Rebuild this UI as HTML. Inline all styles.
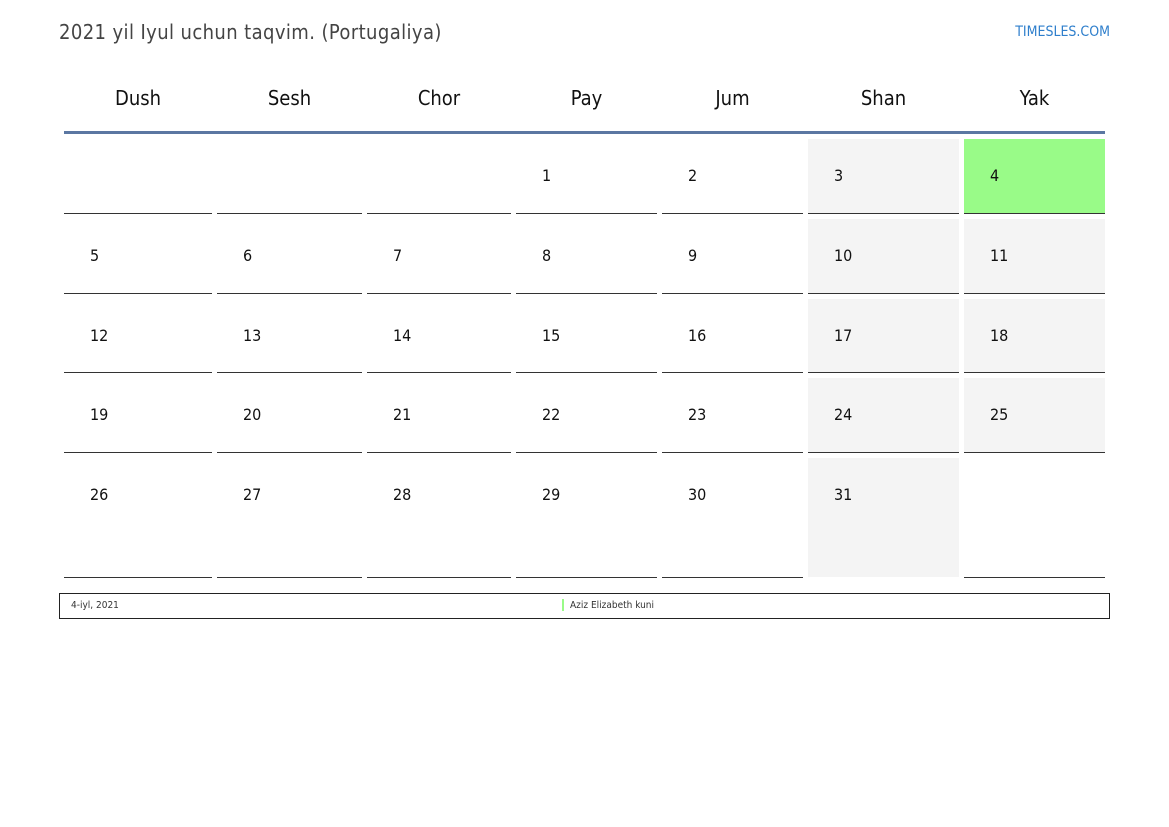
<!DOCTYPE html>
<html><head><meta charset="utf-8"><style>
body{margin:0;width:1169px;height:827px;background:#fff;position:relative;font-family:"DejaVu Sans Condensed","DejaVu Sans",sans-serif;overflow:hidden}
.a{position:absolute}
.t{left:59px;top:20px;font-size:20px;color:#444;white-space:nowrap;letter-spacing:0.4px}
.lg{right:59px;top:24px;font-size:14px;color:#2f7fcc}
.h{top:86px;font-size:20px;color:#111;text-align:center}
.bl{left:64px;top:131px;width:1041px;height:3px;background:#5b77a2}
.c{border-bottom:1px solid #333;box-sizing:border-box}
.n{position:absolute;left:26px;font-size:16px;color:#111}
.g{background:#f4f4f4}
.gr{background:#99fb88}
.f{left:59px;top:593px;width:1051px;height:26px;border:1px solid #222;box-sizing:border-box;font-size:10px;color:#333}
</style></head><body>
<div class="a t">2021 yil Iyul uchun taqvim. (Portugaliya)</div>
<div class="a lg">TIMESLES.COM</div>
<div class="a h" style="left:64px;width:148px">Dush</div>
<div class="a h" style="left:217px;width:145px">Sesh</div>
<div class="a h" style="left:367px;width:144px">Chor</div>
<div class="a h" style="left:516px;width:141px">Pay</div>
<div class="a h" style="left:662px;width:141px">Jum</div>
<div class="a h" style="left:808px;width:151px">Shan</div>
<div class="a h" style="left:964px;width:141px">Yak</div>
<div class="a bl"></div>

<div class="a c" style="left:64px;top:139px;width:148px;height:75px"></div>
<div class="a c" style="left:217px;top:139px;width:145px;height:75px"></div>
<div class="a c" style="left:367px;top:139px;width:144px;height:75px"></div>
<div class="a c" style="left:516px;top:139px;width:141px;height:75px"><span class="n" style="top:27px">1</span></div>
<div class="a c" style="left:662px;top:139px;width:141px;height:75px"><span class="n" style="top:27px">2</span></div>
<div class="a c g" style="left:808px;top:139px;width:151px;height:75px"><span class="n" style="top:27px">3</span></div>
<div class="a c gr" style="left:964px;top:139px;width:141px;height:75px"><span class="n" style="top:27px">4</span></div>

<div class="a c" style="left:64px;top:219px;width:148px;height:75px"><span class="n" style="top:27px">5</span></div>
<div class="a c" style="left:217px;top:219px;width:145px;height:75px"><span class="n" style="top:27px">6</span></div>
<div class="a c" style="left:367px;top:219px;width:144px;height:75px"><span class="n" style="top:27px">7</span></div>
<div class="a c" style="left:516px;top:219px;width:141px;height:75px"><span class="n" style="top:27px">8</span></div>
<div class="a c" style="left:662px;top:219px;width:141px;height:75px"><span class="n" style="top:27px">9</span></div>
<div class="a c g" style="left:808px;top:219px;width:151px;height:75px"><span class="n" style="top:27px">10</span></div>
<div class="a c g" style="left:964px;top:219px;width:141px;height:75px"><span class="n" style="top:27px">11</span></div>

<div class="a c" style="left:64px;top:299px;width:148px;height:74px"><span class="n" style="top:27px">12</span></div>
<div class="a c" style="left:217px;top:299px;width:145px;height:74px"><span class="n" style="top:27px">13</span></div>
<div class="a c" style="left:367px;top:299px;width:144px;height:74px"><span class="n" style="top:27px">14</span></div>
<div class="a c" style="left:516px;top:299px;width:141px;height:74px"><span class="n" style="top:27px">15</span></div>
<div class="a c" style="left:662px;top:299px;width:141px;height:74px"><span class="n" style="top:27px">16</span></div>
<div class="a c g" style="left:808px;top:299px;width:151px;height:74px"><span class="n" style="top:27px">17</span></div>
<div class="a c g" style="left:964px;top:299px;width:141px;height:74px"><span class="n" style="top:27px">18</span></div>

<div class="a c" style="left:64px;top:378px;width:148px;height:75px"><span class="n" style="top:27px">19</span></div>
<div class="a c" style="left:217px;top:378px;width:145px;height:75px"><span class="n" style="top:27px">20</span></div>
<div class="a c" style="left:367px;top:378px;width:144px;height:75px"><span class="n" style="top:27px">21</span></div>
<div class="a c" style="left:516px;top:378px;width:141px;height:75px"><span class="n" style="top:27px">22</span></div>
<div class="a c" style="left:662px;top:378px;width:141px;height:75px"><span class="n" style="top:27px">23</span></div>
<div class="a c g" style="left:808px;top:378px;width:151px;height:75px"><span class="n" style="top:27px">24</span></div>
<div class="a c g" style="left:964px;top:378px;width:141px;height:75px"><span class="n" style="top:27px">25</span></div>

<div class="a c" style="left:64px;top:458px;width:148px;height:120px"><span class="n" style="top:27px">26</span></div>
<div class="a c" style="left:217px;top:458px;width:145px;height:120px"><span class="n" style="top:27px">27</span></div>
<div class="a c" style="left:367px;top:458px;width:144px;height:120px"><span class="n" style="top:27px">28</span></div>
<div class="a c" style="left:516px;top:458px;width:141px;height:120px"><span class="n" style="top:27px">29</span></div>
<div class="a c" style="left:662px;top:458px;width:141px;height:120px"><span class="n" style="top:27px">30</span></div>
<div class="a g" style="left:808px;top:458px;width:151px;height:119px"><span class="n" style="top:27px">31</span></div>
<div class="a c" style="left:964px;top:458px;width:141px;height:120px"></div>

<div class="a f">
<span class="a" style="left:11px;top:6px">4-iyl, 2021</span>
<span class="a" style="left:502px;top:5px;width:2px;height:12px;background:#99fb88"></span>
<span class="a" style="left:510px;top:6px">Aziz Elizabeth kuni</span>
</div>
</body></html>
